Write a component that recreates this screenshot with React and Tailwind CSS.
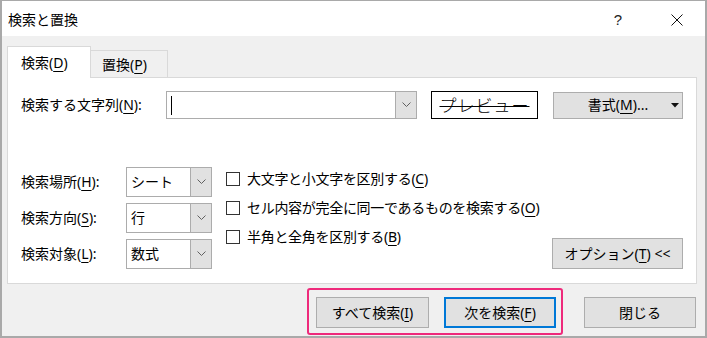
import React from "react";

const Chevron = () => (
  <svg width="9" height="6" viewBox="0 0 9 6" fill="none">
    <path d="M0.5 0.5 L4.5 4.5 L8.5 0.5" stroke="#606060" strokeWidth="1" />
  </svg>
);

const U = ({ children }) => (
  <span className="underline underline-offset-[3px] decoration-1">{children}</span>
);

const Select = ({ value }) => (
  <div className="w-[86px] h-[30px] flex border border-[#acacac] bg-white">
    <div className="flex-1 flex items-center pl-[4px]">{value}</div>
    <div className="w-[21px] bg-[#e1e1e1] border-l border-[#acacac] flex items-center justify-center">
      <Chevron />
    </div>
  </div>
);

const Check = ({ children }) => (
  <div className="h-[29px] flex items-center">
    <div className="w-[14px] h-[14px] border border-[#333] bg-white" />
    <span className="ml-[7px] tracking-[-0.3px]">{children}</span>
  </div>
);

const Btn = ({ className = "", children }) => (
  <div
    className={
      "h-[31px] flex items-center justify-center bg-[#e1e1e1] border border-[#adadad] " +
      className
    }
  >
    {children}
  </div>
);

const App = () => {
  const rows = [
    { label: "検索場所", key: "H", value: "シート" },
    { label: "検索方向", key: "S", value: "行" },
    { label: "検索対象", key: "L", value: "数式" },
  ];

  return (
    <div className="w-[707px] h-[338px] flex flex-col border-2 border-t border-[#a9a9a9] bg-[#f0f0f0] text-[14px] leading-none text-black font-['Noto_Sans','Noto_Sans_CJK_JP',sans-serif]">
      {/* title bar */}
      <div className="h-[35px] bg-white flex items-center pt-[2px] pl-[6px]">
        <span className="text-[14px]">検索と置換</span>
        <span className="ml-auto text-[15px] font-['Liberation_Sans',sans-serif] text-[#222]">?</span>
        <svg className="ml-[49px] mr-[22px]" width="12" height="12" viewBox="0 0 12 12">
          <path d="M0.5 0.5 L11.5 11.5 M11.5 0.5 L0.5 11.5" stroke="#111" strokeWidth="1" />
        </svg>
      </div>

      <div className="flex-1 flex flex-col pl-[5px] pr-[8px]">
        {/* tabs */}
        <div className="mt-[10px] h-[31px] flex items-end">
          <div className="relative z-10 h-[32px] -mb-px w-[84px] bg-white border border-b-0 border-[#d9d9d9] flex items-center pl-[13px]">
            検索(<U>D</U>)
          </div>
          <div className="h-[27px] w-[77px] border border-l-0 border-b-0 border-[#d9d9d9] flex items-center pl-[11px] pt-px">
            置換(<U>P</U>)
          </div>
        </div>

        {/* panel */}
        <div className="h-[207px] bg-white border border-[#d9d9d9] flex flex-col pl-[13px] pr-[13px]">
          <div className="mt-[13px] flex items-center">
            <div className="w-[145px]">
              検索する文字列(<U>N</U>):
            </div>
            <div className="w-[251px] h-[28px] flex border border-[#acacac]">
              <div className="flex-1 flex items-center pl-[4px]">
                <div className="w-px h-[19px] bg-black" />
              </div>
              <div className="w-[21px] bg-[#e1e1e1] border-l border-[#acacac] flex items-center justify-center">
                <Chevron />
              </div>
            </div>
            <div className="ml-[14px] w-[107px] h-[28px] border border-black flex items-center justify-center">
              <span className="text-[17px] tracking-[1px] line-through decoration-1 font-light">プレビュー</span>
            </div>
            <div className="ml-[15px] w-[130px] h-[27px] relative bg-[#e1e1e1] border border-[#adadad] flex items-center justify-center">
              書式(<U>M</U>)...
              <svg className="absolute right-[3px] top-[10px]" width="8" height="5" viewBox="0 0 8 5">
                <path d="M0 0 H8 L4 4.5 Z" fill="#111" />
              </svg>
            </div>
          </div>

          <div className="mt-[48px] flex">
            <div className="flex flex-col gap-[6px]">
              {rows.map((r) => (
                <div key={r.key} className="flex items-center">
                  <div className="w-[105px]">
                    {r.label}(<U>{r.key}</U>):
                  </div>
                  <Select value={r.value} />
                </div>
              ))}
            </div>
            <div className="ml-[14px] -mt-[3px] flex flex-col">
              <Check>
                大文字と小文字を区別する(<U>C</U>)
              </Check>
              <Check>
                セル内容が完全に同一であるものを検索する(<U>O</U>)
              </Check>
              <Check>
                半角と全角を区別する(<U>B</U>)
              </Check>
            </div>
            <Btn className="ml-auto self-end w-[131px]">
              オプション(<U>T</U>) &lt;&lt;
            </Btn>
          </div>
        </div>

        {/* bottom buttons */}
        <div className="mt-[4px] flex items-start justify-end">
          <div className="border-2 border-[#ee2a7b] rounded-[3px] pl-[7px] pr-[5px] pt-[7px] pb-[5px] flex gap-[15px]">
            <Btn className="w-[113px]">
              すべて検索(<U>I</U>)
            </Btn>
            <div className="w-[112px] h-[31px] flex items-center justify-center bg-[#e1e1e1] border-2 border-[#0078d7]">
              次を検索(<U>F</U>)
            </div>
          </div>
          <Btn className="ml-[21px] mt-[9px] w-[112px] mr-px">閉じる</Btn>
        </div>
      </div>
    </div>
  );
};

export default App;
